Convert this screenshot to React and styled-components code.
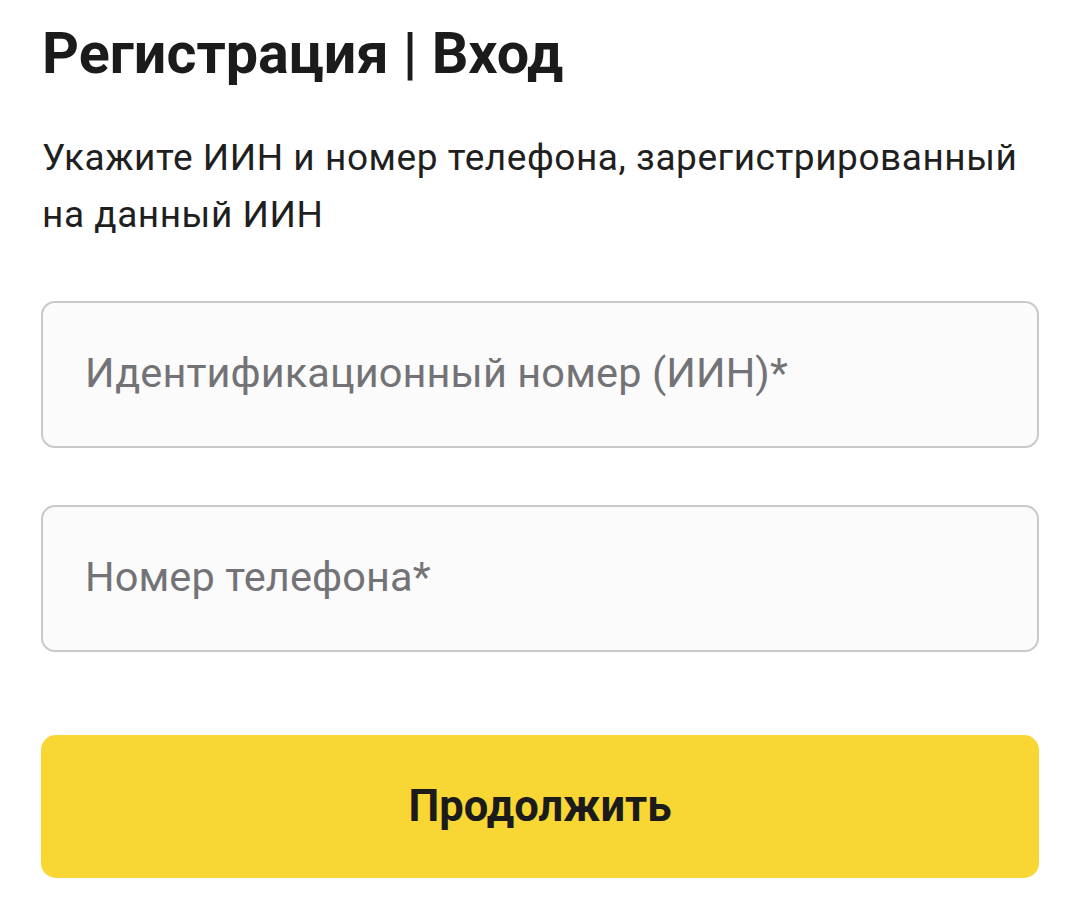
import React from "react";
import styled, { createGlobalStyle } from "styled-components";

const GlobalStyle = createGlobalStyle`
  html, body { margin: 0; padding: 0; background: #ffffff; }
  body { font-family: Roboto, "Noto Sans", "Liberation Sans", sans-serif; -webkit-font-smoothing: antialiased; }
  * { box-sizing: border-box; }
`;

const Page = styled.main`
  display: flex;
  flex-direction: column;
  padding: 21px 41px 0 41px;
  width: 1080px;
`;

const Title = styled.h1`
  margin: 0;
  font-size: 57.5px;
  font-weight: 700;
  line-height: 66px;
  color: #1b1b1b;
  padding-left: 1px;
`;

const Lead = styled.p`
  margin: 42px 0 0 0;
  font-size: 37px;
  letter-spacing: 0.55px;
  line-height: 57px;
  font-weight: 400;
  color: #1f1f1f;
  padding-left: 1px;
`;

const Form = styled.form`
  display: flex;
  flex-direction: column;
  margin-top: 58px;
`;

const Fields = styled.div`
  display: flex;
  flex-direction: column;
  gap: 57px;
`;

const Input = styled.input`
  height: 147px;
  width: 100%;
  border: 2px solid #c9c9cb;
  border-radius: 14px;
  background: #fbfbfc;
  padding: 0 42px 5px 42px;
  font-family: inherit;
  font-size: 41.5px;
  letter-spacing: 0.1px;
  font-weight: 400;
  color: #1b1b1b;
  outline: none;
  &::placeholder {
    color: #737377;
    opacity: 1;
  }
`;

const Submit = styled.button`
  margin-top: 83px;
  height: 143px;
  width: 100%;
  border: none;
  border-radius: 15px;
  background: #f8d633;
  font-family: inherit;
  font-size: 43.5px;
  font-weight: 700;
  color: #1b1b1b;
  cursor: pointer;
`;

export default function App() {
  return (
    <>
      <GlobalStyle />
      <Page>
        <Title>Регистрация | Вход</Title>
        <Lead>
          Укажите ИИН и номер телефона, зарегистрированный
          <br />
          на данный ИИН
        </Lead>
        <Form onSubmit={(e) => e.preventDefault()}>
          <Fields>
            <Input placeholder="Идентификационный номер (ИИН)*" />
            <Input placeholder="Номер телефона*" />
          </Fields>
          <Submit type="submit">Продолжить</Submit>
        </Form>
      </Page>
    </>
  );
}
